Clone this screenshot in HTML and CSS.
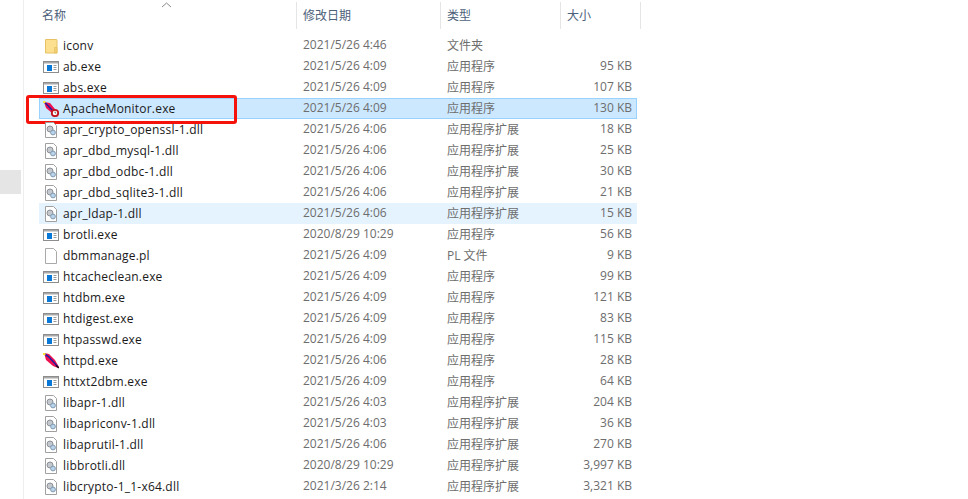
FILE: index.html
```html
<!DOCTYPE html>
<html lang="zh-CN">
<head>
  <meta charset="UTF-8" />
  <title>bin</title>
  <link rel="stylesheet" href="styles.css">
</head>
<body>
  <svg class="defs" width="0" height="0">
    <symbol id="i-folder" viewBox="0 0 16 16">
      <path d="M2.500 1.500h11a.5.5 0 0 1 .5.5v13H2.500z" fill="#fce08f" stroke="#e6c263"/>
      <path d="M11.500 9.500H14V15h-2.500z" fill="#f3cf73" stroke="#e6c263" stroke-width=".7"/>
    </symbol>
    <symbol id="i-exe" viewBox="0 0 16 16">
      <rect x=".5" y="2.500" width="15" height="11" fill="#fff" stroke="#8d8d8d"/>
      <path d="M1 3h14v1.500H1z" fill="#a9a9a9"/>
      <rect x="4" y="6" width="5" height="6" fill="#0a78d7"/>
      <path d="M10.500 6.500h3M10.500 8.500h3M10.500 10.500h3" stroke="#9a9a9a"/>
    </symbol>
    <symbol id="i-dll" viewBox="0 0 16 16">
      <path d="M2.500 .5h8l3 3v12h-11z" fill="#fff" stroke="#a0a0a0"/>
      <circle cx="7" cy="7" r="3" fill="#c4c9cf" stroke="#8b8f95"/>
      <circle cx="10" cy="10.500" r="2.400" fill="#b8d3ea" stroke="#7f99b2"/>
    </symbol>
    <symbol id="i-file" viewBox="0 0 16 16">
      <path d="M2.500 .5h8l3 3v12h-11z" fill="#fff" stroke="#a9a9a9"/>
    </symbol>
    <symbol id="i-feather" viewBox="0 0 16 16">
      <path d="M1 0 L6 1 L12 7 L16 14 L15 15 L10 13 L3 7z" fill="#ee1050"/>
      <path d="M2 1 L6 4 L15 14" fill="none" stroke="#2a1aa0" stroke-width="1.600"/>
      <path d="M13 12.500 L16 15" stroke="#111" stroke-width="1.300"/>
      <rect x="0" y="0" width="2.500" height="2" fill="#f7e23a"/>
    </symbol>
    <symbol id="i-monitor" viewBox="0 0 16 16">
      <path d="M1 1 L7 2 L12 8 L9 12 L3 7z" fill="#ee1050"/>
      <path d="M2 1.500 L10 10" stroke="#2a1aa0" stroke-width="1.600"/>
      <rect x="0" y="0" width="2.500" height="2" fill="#f7e23a"/>
      <circle cx="12" cy="12" r="3.200" fill="#fff" stroke="#c1121f" stroke-width="1.800"/>
      <path d="M12 10.500V12h1.200" fill="none" stroke="#333" stroke-width=".7"/>
    </symbol>
  </svg>

  <div class="page">
    <aside class="nav-pane">
      <div class="nav-selected"></div>
    </aside>

    <main class="files">
      <div class="head">
        <span class="col-title col-name">名称<svg class="sort" width="11" height="6" viewBox="0 0 11 6"><path d="M1 5l4.500-4L10 5" fill="none" stroke="#8a8a8a"/></svg></span>
        <span class="col-title">修改日期</span>
        <span class="col-title">类型</span>
        <span class="col-title">大小</span>
      </div>

      <div class="row"><span class="name"><svg class="icon"><use href="#i-folder"/></svg>iconv</span><span class="date">2021/5/26 4:46</span><span class="type">文件夹</span><span class="size"></span></div>
      <div class="row"><span class="name"><svg class="icon"><use href="#i-exe"/></svg>ab.exe</span><span class="date">2021/5/26 4:09</span><span class="type">应用程序</span><span class="size">95 KB</span></div>
      <div class="row"><span class="name"><svg class="icon"><use href="#i-exe"/></svg>abs.exe</span><span class="date">2021/5/26 4:09</span><span class="type">应用程序</span><span class="size">107 KB</span></div>
      <div class="row selected"><span class="name"><svg class="icon"><use href="#i-monitor"/></svg>ApacheMonitor.exe</span><span class="date">2021/5/26 4:09</span><span class="type">应用程序</span><span class="size">130 KB</span></div>
      <div class="row"><span class="name"><svg class="icon"><use href="#i-dll"/></svg>apr_crypto_openssl-1.dll</span><span class="date">2021/5/26 4:06</span><span class="type">应用程序扩展</span><span class="size">18 KB</span></div>
      <div class="row"><span class="name"><svg class="icon"><use href="#i-dll"/></svg>apr_dbd_mysql-1.dll</span><span class="date">2021/5/26 4:06</span><span class="type">应用程序扩展</span><span class="size">25 KB</span></div>
      <div class="row"><span class="name"><svg class="icon"><use href="#i-dll"/></svg>apr_dbd_odbc-1.dll</span><span class="date">2021/5/26 4:06</span><span class="type">应用程序扩展</span><span class="size">30 KB</span></div>
      <div class="row"><span class="name"><svg class="icon"><use href="#i-dll"/></svg>apr_dbd_sqlite3-1.dll</span><span class="date">2021/5/26 4:06</span><span class="type">应用程序扩展</span><span class="size">21 KB</span></div>
      <div class="row hovered"><span class="name"><svg class="icon"><use href="#i-dll"/></svg>apr_ldap-1.dll</span><span class="date">2021/5/26 4:06</span><span class="type">应用程序扩展</span><span class="size">15 KB</span></div>
      <div class="row"><span class="name"><svg class="icon"><use href="#i-exe"/></svg>brotli.exe</span><span class="date">2020/8/29 10:29</span><span class="type">应用程序</span><span class="size">56 KB</span></div>
      <div class="row"><span class="name"><svg class="icon"><use href="#i-file"/></svg>dbmmanage.pl</span><span class="date">2021/5/26 4:09</span><span class="type">PL 文件</span><span class="size">9 KB</span></div>
      <div class="row"><span class="name"><svg class="icon"><use href="#i-exe"/></svg>htcacheclean.exe</span><span class="date">2021/5/26 4:09</span><span class="type">应用程序</span><span class="size">99 KB</span></div>
      <div class="row"><span class="name"><svg class="icon"><use href="#i-exe"/></svg>htdbm.exe</span><span class="date">2021/5/26 4:09</span><span class="type">应用程序</span><span class="size">121 KB</span></div>
      <div class="row"><span class="name"><svg class="icon"><use href="#i-exe"/></svg>htdigest.exe</span><span class="date">2021/5/26 4:09</span><span class="type">应用程序</span><span class="size">83 KB</span></div>
      <div class="row"><span class="name"><svg class="icon"><use href="#i-exe"/></svg>htpasswd.exe</span><span class="date">2021/5/26 4:09</span><span class="type">应用程序</span><span class="size">115 KB</span></div>
      <div class="row"><span class="name"><svg class="icon"><use href="#i-feather"/></svg>httpd.exe</span><span class="date">2021/5/26 4:06</span><span class="type">应用程序</span><span class="size">28 KB</span></div>
      <div class="row"><span class="name"><svg class="icon"><use href="#i-exe"/></svg>httxt2dbm.exe</span><span class="date">2021/5/26 4:09</span><span class="type">应用程序</span><span class="size">64 KB</span></div>
      <div class="row"><span class="name"><svg class="icon"><use href="#i-dll"/></svg>libapr-1.dll</span><span class="date">2021/5/26 4:03</span><span class="type">应用程序扩展</span><span class="size">204 KB</span></div>
      <div class="row"><span class="name"><svg class="icon"><use href="#i-dll"/></svg>libapriconv-1.dll</span><span class="date">2021/5/26 4:03</span><span class="type">应用程序扩展</span><span class="size">36 KB</span></div>
      <div class="row"><span class="name"><svg class="icon"><use href="#i-dll"/></svg>libaprutil-1.dll</span><span class="date">2021/5/26 4:06</span><span class="type">应用程序扩展</span><span class="size">270 KB</span></div>
      <div class="row"><span class="name"><svg class="icon"><use href="#i-dll"/></svg>libbrotli.dll</span><span class="date">2020/8/29 10:29</span><span class="type">应用程序扩展</span><span class="size">3,997 KB</span></div>
      <div class="row"><span class="name"><svg class="icon"><use href="#i-dll"/></svg>libcrypto-1_1-x64.dll</span><span class="date">2021/3/26 2:14</span><span class="type">应用程序扩展</span><span class="size">3,321 KB</span></div>
    </main>
  </div>
</body>
</html>
```

FILE: styles.css
```css
html, body {
  height: 100%;
}

body {
  margin: 0;
  background: #fff;
  overflow: hidden;
  font-family: 'Open Sans', 'Noto Sans CJK SC', sans-serif;
  font-size: 12px;
  color: #6d6d6d;
}

.defs {
  position: absolute;
}

.page {
  display: flex;
  height: 100%;
}

.nav-pane {
  width: 23px;
  border-right: 1px solid #eeeeee;
}

.nav-selected {
  width: 21px;
  height: 24px;
  margin-top: 170px;
  background: #e5e5e5;
}

.files {
  width: 598px;
  margin-left: 15px;
}

.head {
  display: grid;
  grid-template-columns: 258px 144px 120px 80px;
  height: 35px;
}

.col-title {
  position: relative;
  height: 27px;
  margin-top: 2px;
  padding-left: 6px;
  border-right: 1px solid #e5e5e5;
  line-height: 28px;
  color: #4c607a;
}

.col-name {
  padding-left: 3px;
}

.sort {
  position: absolute;
  left: 122px;
  top: 0;
}

.row {
  position: relative;
  display: grid;
  grid-template-columns: 258px 143px 120px 77px;
  height: 21px;
  line-height: 20px;
  box-sizing: border-box;
}

.row.selected {
  background: #cce8ff;
  outline: 1px solid #99d1ff;
  outline-offset: -1px;
}

.row.hovered {
  background: #e5f3ff;
}

/* красная рамка поверх выбранной строки */
.row.selected::after {
  content: '';
  position: absolute;
  left: -13px;
  top: -3px;
  width: 205px;
  height: 23px;
  border: 3px solid #f5120a;
  border-radius: 3px;
}

.name {
  display: flex;
  align-items: center;
  gap: 4px;
  padding-left: 4px;
  color: #1a1a1a;
  letter-spacing: 0.2px;
  white-space: nowrap;
}

.icon {
  width: 16px;
  height: 16px;
  flex: none;
}

.date {
  padding-left: 6px;
}

.type {
  padding-left: 7px;
  line-height: 22px;
}

.size {
  padding-right: 5px;
  text-align: right;
}
```
